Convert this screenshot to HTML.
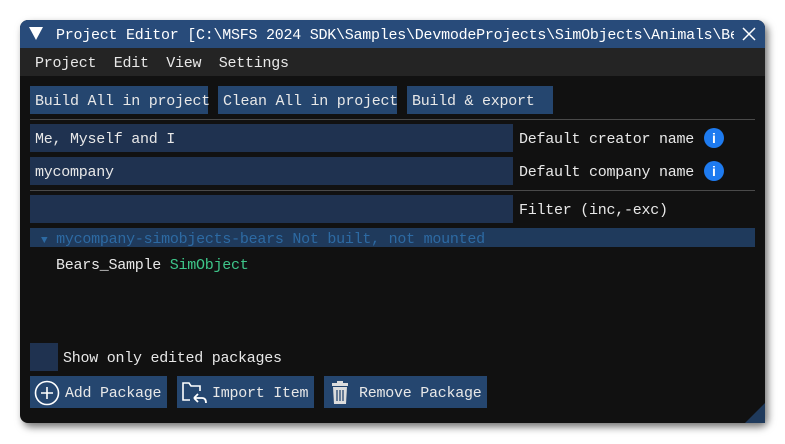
<!DOCTYPE html>
<html><head><meta charset="utf-8"><style>
*{margin:0;padding:0;box-sizing:border-box}
body{width:785px;height:444px;background:#fff;position:relative;overflow:hidden;font-family:"Liberation Mono",monospace;font-size:15px;letter-spacing:-0.25px;color:#e8e8e8}
.a{position:absolute;white-space:nowrap}
#win{left:20px;top:20px;width:745px;height:403px;background:#111;border-radius:8px;overflow:hidden;box-shadow:3px 4px 8px rgba(0,0,0,.55)}
.btn{background:#25466f;height:28px;line-height:31px;padding-left:5px}
.inp{background:#1f3250;height:28px;line-height:31px;padding-left:5px;left:30px;width:483px}
.lbl{line-height:31px;left:519px}
.info{width:20px;height:20px;border-radius:50%;background:#1e7bf0;color:#fff;font:bold 14px "Liberation Sans",sans-serif;text-align:center;line-height:20px;left:704px;letter-spacing:0}
.sep{height:1px;background:#4a4a4a;left:30px;width:725px}
</style></head><body>
<div id="win" class="a"></div>
<div class="a" style="left:20px;top:20px;width:745px;height:28px;background:#284b7a;border-radius:8px 8px 0 0"></div>
<div class="a" style="left:29px;top:27px;width:0;height:0;border-left:7px solid transparent;border-right:7px solid transparent;border-top:13px solid #fff"></div>
<div class="a" style="left:56px;top:20px;line-height:31px;width:678px;overflow:hidden;color:#fff">Project Editor [C:\MSFS 2024 SDK\Samples\DevmodeProjects\SimObjects\Animals\Bears]</div>
<svg class="a" style="left:741px;top:26px" width="16" height="16"><path d="M2 2L14 14M14 2L2 14" stroke="#fff" stroke-width="1.5"/></svg>
<div class="a" style="left:20px;top:48px;width:745px;height:28px;background:#242424"></div>
<div class="a" style="left:35px;top:48px;line-height:31px">Project&nbsp; Edit&nbsp; View&nbsp; Settings</div>
<div class="a btn" style="left:30px;top:86px;width:178px">Build All in project</div>
<div class="a btn" style="left:218px;top:86px;width:179px">Clean All in project</div>
<div class="a btn" style="left:407px;top:86px;width:146px">Build &amp; export</div>
<div class="a sep" style="top:119px"></div>
<div class="a inp" style="top:124px">Me, Myself and I</div>
<div class="a lbl" style="top:124px">Default creator name</div>
<div class="a info" style="top:128px">i</div>
<div class="a inp" style="top:157px">mycompany</div>
<div class="a lbl" style="top:157px">Default company name</div>
<div class="a info" style="top:161px">i</div>
<div class="a sep" style="top:190px"></div>
<div class="a inp" style="top:195px"></div>
<div class="a lbl" style="top:195px">Filter (inc,-exc)</div>
<div class="a" style="left:30px;top:228px;width:725px;height:19px;background:#1f3a5c"></div>
<div class="a" style="left:41px;top:229px;line-height:21px;color:#2d6aa3"><span style="font-size:11px">▼</span> mycompany-simobjects-bears Not built, not mounted</div>
<div class="a" style="left:56px;top:255px;line-height:21px">Bears_Sample <span style="color:#3ec68a">SimObject</span></div>
<div class="a" style="left:30px;top:343px;width:28px;height:28px;background:#1f3250"></div>
<div class="a" style="left:63px;top:343px;line-height:31px">Show only edited packages</div>
<div class="a btn" style="left:30px;top:376px;width:137px;height:32px;line-height:35px;padding-left:35px">Add Package</div>
<svg class="a" style="left:34px;top:380px" width="26" height="26"><circle cx="13" cy="13" r="11.5" fill="none" stroke="#fff" stroke-width="1.6"/><path d="M13 7V19M7 13H19" stroke="#fff" stroke-width="1.6"/></svg>
<div class="a btn" style="left:177px;top:376px;width:137px;height:32px;line-height:35px;padding-left:35px">Import Item</div>
<svg class="a" style="left:181px;top:380px" width="28" height="26"><path d="M9 20H2V3H8L10 6H19V11" fill="none" stroke="#fff" stroke-width="1.6"/><path d="M13 18L17 14M13 18L17 22M13 18H21Q25 18 25 23" fill="none" stroke="#fff" stroke-width="1.8"/></svg>
<div class="a btn" style="left:324px;top:376px;width:163px;height:32px;line-height:35px;padding-left:35px">Remove Package</div>
<svg class="a" style="left:331px;top:381px" width="20" height="24"><rect x="1" y="2" width="16" height="3" fill="#ddd"/><rect x="6" y="0" width="6" height="3" fill="#ddd"/><path d="M2 6H16L15 23H3Z" fill="#ddd"/><path d="M6 9V20M9 9V20M12 9V20" stroke="#25466f" stroke-width="1.3"/></svg>
<div class="a" style="left:745px;top:403px;width:0;height:0;border-left:20px solid transparent;border-bottom:20px solid #1f3a5c"></div>
</body></html>
